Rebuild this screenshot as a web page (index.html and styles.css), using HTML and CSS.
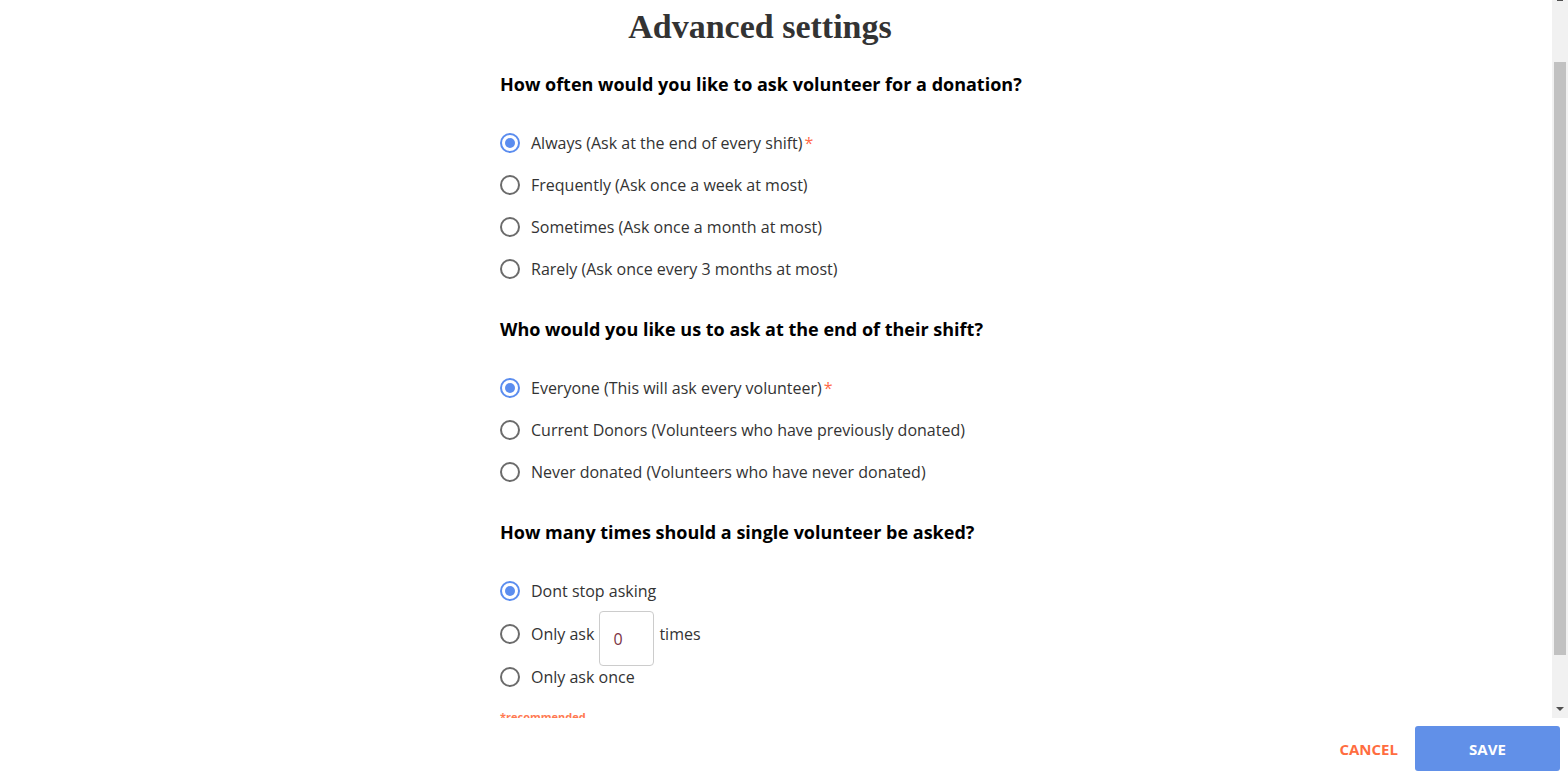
FILE: index.html
```html
<!DOCTYPE html>
<html lang="en">
<head>
<meta charset="utf-8">
<title>Advanced settings</title>
<link rel="stylesheet" href="styles.css">
</head>
<body>
<div class="page">
  <div class="scroll-area">
    <div class="content">
      <div class="form">
        <h1 class="title">Advanced settings</h1>

        <h2 class="question">How often would you like to ask volunteer for a donation?</h2>
        <div class="options">
          <label class="option"><span class="radio checked"></span><span class="label">Always (Ask at the end of every shift)<span class="req">*</span></span></label>
          <label class="option"><span class="radio"></span><span class="label">Frequently (Ask once a week at most)</span></label>
          <label class="option"><span class="radio"></span><span class="label">Sometimes (Ask once a month at most)</span></label>
          <label class="option"><span class="radio"></span><span class="label">Rarely (Ask once every 3 months at most)</span></label>
        </div>

        <h2 class="question">Who would you like us to ask at the end of their shift?</h2>
        <div class="options">
          <label class="option"><span class="radio checked"></span><span class="label">Everyone (This will ask every volunteer)<span class="req">*</span></span></label>
          <label class="option"><span class="radio"></span><span class="label">Current Donors (Volunteers who have previously donated)</span></label>
          <label class="option"><span class="radio"></span><span class="label">Never donated (Volunteers who have never donated)</span></label>
        </div>

        <h2 class="question">How many times should a single volunteer be asked?</h2>
        <div class="options tall">
          <label class="option"><span class="radio checked"></span><span class="label">Dont stop asking</span></label>
          <div class="option"><span class="radio"></span><span class="label">Only ask</span><span class="count-box">0</span><span class="label">times</span></div>
          <label class="option"><span class="radio"></span><span class="label">Only ask once</span></label>
        </div>

        <div class="note">*recommended</div>
      </div>
    </div>
    <div class="scrollbar">
      <div class="up-arrow"></div>
      <div class="thumb"></div>
      <div class="down-arrow"></div>
    </div>
  </div>
  <div class="footer">
    <button class="btn-cancel">CANCEL</button>
    <button class="btn-save">SAVE</button>
  </div>
</div>
</body>
</html>
```

FILE: styles.css
```css
* { box-sizing: border-box; }

html, body {
  margin: 0;
  padding: 0;
  background: #fff;
}

body {
  font-family: "Open Sans", "Liberation Sans", sans-serif;
  color: #333;
}

.page {
  width: 1568px;
  height: 778px;
  display: flex;
  flex-direction: column;
  overflow: hidden;
}

.scroll-area {
  height: 718px;
  display: flex;
  flex-direction: row;
}

.content {
  flex: 1;
  overflow: hidden;
}

.form {
  width: 552px;
  margin: 0 auto;
}

.title {
  width: 520px;
  margin: 7px 0 0 0;
  font-family: "Liberation Serif", "Times New Roman", serif;
  font-weight: bold;
  font-size: 34px;
  line-height: 39px;
  color: #333;
  text-align: center;
}

.title + .question {
  margin-top: 26px;
}

.question {
  margin: 28px 0 26px 0;
  font-size: 18px;
  line-height: 24px;
  font-weight: 700;
  color: #000;
}

.options + .question {
  margin-top: 27px;
}

.options {
  display: flex;
  flex-direction: column;
}

.options.tall {
  margin-top: -1px;
}

.option {
  height: 42px;
  display: flex;
  align-items: center;
  gap: 11px;
  font-size: 16px;
  color: #333;
  cursor: pointer;
}

.options.tall .option {
  height: 43px;
}

.radio {
  flex: none;
  width: 20px;
  height: 20px;
  border: 2px solid #6b6b6b;
  border-radius: 50%;
  display: flex;
  align-items: center;
  justify-content: center;
}

.radio.checked {
  border-color: #5b8def;
}

.radio.checked::after {
  content: "";
  width: 10px;
  height: 10px;
  border-radius: 50%;
  background: #5b8def;
}

.label {
  white-space: nowrap;
}

.req {
  color: #ff6b4a;
  margin-left: 2px;
}

.count-box {
  flex: none;
  width: 55px;
  height: 55px;
  margin: -1px -6px -11px -6px;
  padding-left: 13px;
  border: 1px solid #ccc;
  border-radius: 4px;
  display: flex;
  align-items: center;
  font-size: 16px;
  color: #7a3344;
}

.note {
  margin-top: 11px;
  font-size: 11px;
  line-height: 15px;
  font-weight: 700;
  color: #ff7a52;
}

.scrollbar {
  width: 16px;
  flex: none;
  background: #f1f1f1;
  display: flex;
  flex-direction: column;
  align-items: center;
}

.up-arrow {
  width: 6px;
  height: 1px;
  background: #505050;
  margin-bottom: 61px;
}

.thumb {
  width: 12px;
  height: 593px;
  background: #c1c1c1;
}

.down-arrow {
  margin-top: auto;
  margin-bottom: 7px;
  width: 0;
  height: 0;
  border-left: 4px solid transparent;
  border-right: 4px solid transparent;
  border-top: 4px solid #505050;
}

.footer {
  height: 60px;
  display: flex;
  justify-content: flex-end;
  align-items: center;
  padding: 1px 8px 0 0;
}

.btn-cancel {
  font-family: "Open Sans", "Liberation Sans", sans-serif;
  font-weight: 700;
  font-size: 15px;
  color: #ff6d3f;
  background: transparent;
  border: none;
  padding: 0 17px 0 0;
  height: 45px;
  cursor: pointer;
}

.btn-save {
  font-family: "Open Sans", "Liberation Sans", sans-serif;
  font-weight: 700;
  font-size: 15px;
  color: #fff;
  background: #6190e8;
  border: none;
  border-radius: 3px;
  width: 145px;
  height: 45px;
  cursor: pointer;
}
```
